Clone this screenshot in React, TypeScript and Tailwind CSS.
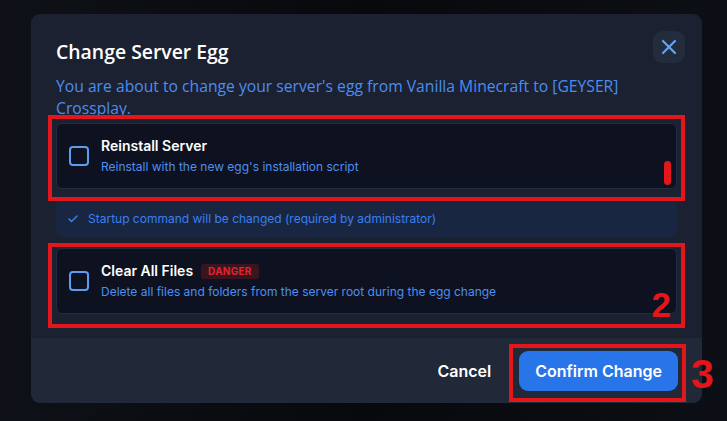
import { Check, X } from "lucide-react";

const sans = "font-['Inter','Noto_Sans',sans-serif]";
const head = "font-['Open_Sans','Noto_Sans',sans-serif]";
const mark = "font-['Liberation_Sans',Arial,sans-serif]";

function Checkbox() {
  return <span className="h-5 w-5 shrink-0 rounded-[4px] border-2 border-[#5d9cf0]" />;
}

function OptionCard({
  title,
  desc,
  danger,
}: {
  title: string;
  desc: string;
  danger?: boolean;
}) {
  return (
    <div className="flex items-center gap-3 rounded-md border border-[#242c3c] bg-[#0e1220] py-3 pl-3">
      <Checkbox />
      <div className="min-w-0">
        <div className="flex h-5 items-center gap-2">
          <p className="text-sm leading-5 font-semibold text-white">{title}</p>
          {danger && (
            <span className="rounded-[3px] bg-[#3a1520] px-[7px] py-0.5 text-[10px] leading-[11px] font-bold tracking-wide text-[#e3242d]">
              DANGER
            </span>
          )}
        </div>
        <p className="mt-0.5 text-[12px] leading-[18px] text-[#4d8ff0]">{desc}</p>
      </div>
    </div>
  );
}

export default function App() {
  return (
    <div
      className={`h-[421px] w-[727px] overflow-hidden bg-gradient-to-r from-[#0e1117] via-[#08090d] to-[#0c0f15] pt-[14px] pl-[31px] ${sans}`}
    >
      <div className="relative w-[671px] rounded-[9px] bg-[#1b2130]">
        <div className="flex items-start justify-between pt-[17px] pr-[17px] pl-[25px]">
          <h2 className={`pt-[7px] text-[19.4px] leading-7 font-semibold text-white ${head}`}>
            Change Server Egg
          </h2>
          <button className="flex h-8 w-8 items-center justify-center rounded-[9px] bg-[#222c3d] text-[#64a4f6]">
            <X size={24} strokeWidth={2.2} />
          </button>
        </div>

        <div className="px-[25px] pb-6">
          <p className={`mt-[9px] pr-4 text-[15.7px] leading-[22px] text-[#4b8df0] ${head}`}>
            You are about to change your server's egg from Vanilla Minecraft to [GEYSER]
            Crossplay.
          </p>

          <div className="relative mt-1">
            <OptionCard
              title="Reinstall Server"
              desc="Reinstall with the new egg's installation script"
            />
            <div className="pointer-events-none absolute -top-2 -right-2 -bottom-3 -left-2 border-4 border-[#e3161c]" />
            <span className="absolute top-[38px] right-[6px] h-6 w-[7px] rounded-full bg-[#e3161c]" />
          </div>

          <div className="mt-3 flex h-9 items-center gap-[9px] rounded-md bg-[#182642] px-[11px]">
            <Check size={12} strokeWidth={3} className="text-[#3b7ff0]" />
            <span className="text-xs leading-4 text-[#3b7ff0]">
              Startup command will be changed (required by administrator)
            </span>
          </div>

          <div className="relative mt-[11px]">
            <OptionCard
              title="Clear All Files"
              desc="Delete all files and folders from the server root during the egg change"
              danger
            />
            <div className="pointer-events-none absolute -top-[5px] -right-2 -bottom-[14px] -left-2 border-4 border-[#e3161c]" />
            <span
              className={`absolute top-[39px] right-[6px] text-[35px] leading-none font-bold text-[#e3161c] ${mark}`}
            >
              2
            </span>
          </div>
        </div>

        <div className="flex h-[65px] items-center justify-end gap-7 rounded-b-[9px] bg-[#212938] pr-6">
          <button className="text-base font-semibold text-white">Cancel</button>
          <div className="relative">
            <button className="h-10 rounded-[9px] bg-[#2775e8] px-4 text-base font-semibold text-white">
              Confirm Change
            </button>
            <div className="pointer-events-none absolute -top-[7px] -right-2 -bottom-[11px] -left-[10px] border-4 border-[#e3161c]" />
            <span
              className={`absolute top-[3px] left-[calc(100%+13px)] text-[41px] leading-none font-bold text-[#e3161c] ${mark}`}
            >
              3
            </span>
          </div>
        </div>
      </div>
    </div>
  );
}
